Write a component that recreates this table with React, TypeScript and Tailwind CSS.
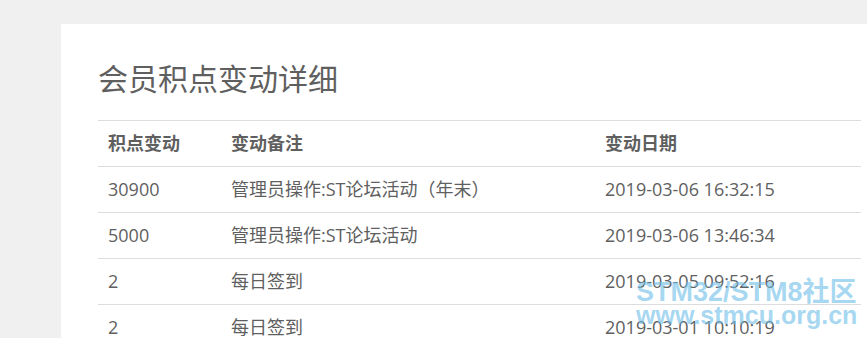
import React from "react";

type Row = { points: string; note: string; date: string };

const rows: Row[] = [
  { points: "30900", note: "管理员操作:ST论坛活动（年末）", date: "2019-03-06 16:32:15" },
  { points: "5000", note: "管理员操作:ST论坛活动", date: "2019-03-06 13:46:34" },
  { points: "2", note: "每日签到", date: "2019-03-05 09:52:16" },
  { points: "2", note: "每日签到", date: "2019-03-01 10:10:19" },
];

const font = { fontFamily: '"Open Sans", "Noto Sans CJK SC", sans-serif' };

export default function App() {
  return (
    <div className="relative h-[338px] w-[867px] overflow-hidden bg-[#f0f0f0] pt-[24px] pl-[61px]" style={font}>
      <div className="h-full bg-white pt-[35px] pl-[37px] pr-[6px] text-[#5f5f5f]">
        <h1 className="text-[30px] leading-[40px] font-normal">会员积点变动详细</h1>
        <table className="mt-[21px] w-[763px] table-fixed border-collapse text-[18px]">
          <colgroup>
            <col className="w-[123px]" />
            <col className="w-[374px]" />
            <col />
          </colgroup>
          <thead>
            <tr className="border-t border-b border-[#ddd]">
              <th className="h-[46px] pl-[10px] text-left font-bold">积点变动</th>
              <th className="h-[46px] pl-[10px] text-left font-bold">变动备注</th>
              <th className="h-[46px] pl-[10px] text-left font-bold">变动日期</th>
            </tr>
          </thead>
          <tbody>
            {rows.map((r, i) => (
              <tr key={i} className="border-b border-[#ddd]">
                <td className="h-[46px] pl-[10px]">{r.points}</td>
                <td className="h-[46px] pl-[10px]">{r.note}</td>
                <td className="h-[46px] pl-[10px]">{r.date}</td>
              </tr>
            ))}
          </tbody>
        </table>
      </div>
      {/* site watermark in the lower-right corner */}
      <div
        className="pointer-events-none absolute left-[636px] top-[280px] font-bold text-[rgba(110,190,232,0.62)]"
        style={{ fontFamily: '"Liberation Sans", "Noto Sans CJK SC", sans-serif' }}
      >
        <div className="text-[27px] leading-[24px]">STM32/STM8社区</div>
        <div className="text-[25px] leading-[22px]">www.stmcu.org.cn</div>
      </div>
    </div>
  );
}
